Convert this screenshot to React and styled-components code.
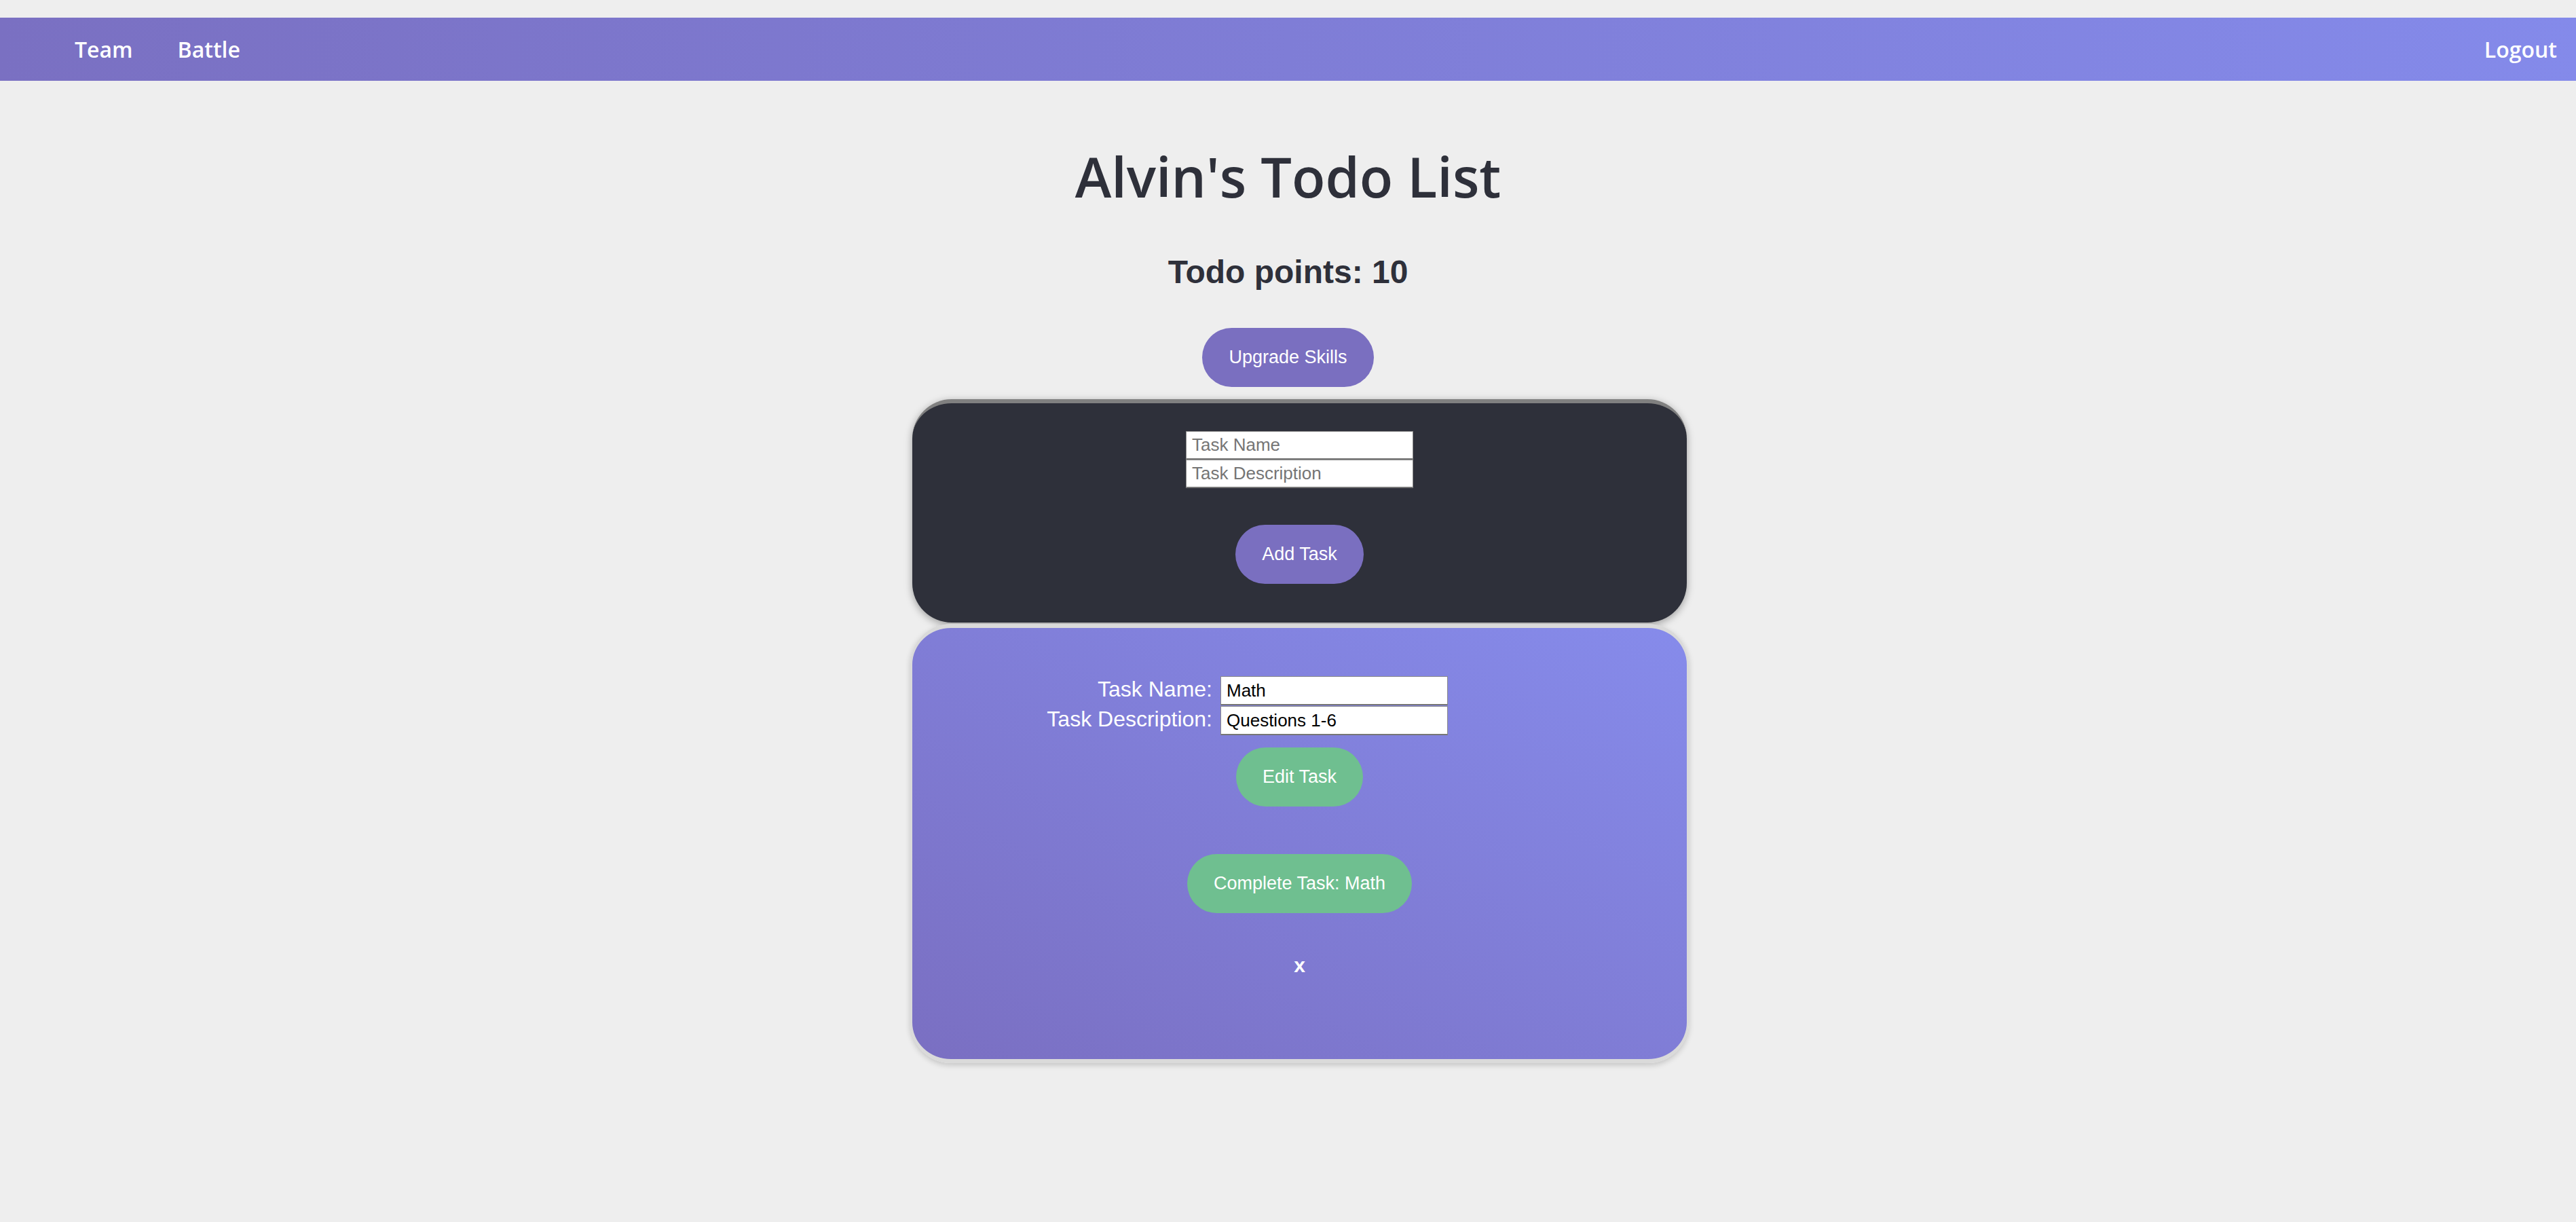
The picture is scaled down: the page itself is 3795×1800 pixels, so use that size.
import React from "react";
import styled, { createGlobalStyle } from "styled-components";

const GlobalStyle = createGlobalStyle`
  html, body {
    margin: 0;
    padding: 0;
    background: #eeeeee;
  }
  body {
    font-family: "Liberation Sans", Arial, sans-serif;
  }
`;

const Page = styled.div`
  min-height: 1800px;
  padding-top: 26px;
  box-sizing: border-box;
  display: flex;
  flex-direction: column;
`;

const NavBar = styled.nav`
  height: 93px;
  display: flex;
  align-items: center;
  padding: 0 28px 0 110px;
  background: linear-gradient(to right, #7a70c2, #848aea);
  font-family: "Open Sans", sans-serif;
  font-weight: 600;
  font-size: 32px;
  color: #ffffff;
`;

const NavLinks = styled.div`
  display: flex;
  gap: 66px;
  flex: 1;
`;

const NavLink = styled.a`
  color: #ffffff;
  text-decoration: none;
  cursor: pointer;
`;

const Main = styled.main`
  display: flex;
  flex-direction: column;
  align-items: center;
`;

const Title = styled.h1`
  margin: 84px 0 0;
  font-family: "Open Sans", sans-serif;
  font-weight: 600;
  font-size: 81px;
  line-height: 114px;
  color: #2e303a;
`;

const Points = styled.h2`
  margin: 56px 0 0;
  font-family: "Liberation Sans", Arial, sans-serif;
  font-weight: 700;
  font-size: 48px;
  line-height: 55px;
  color: #2e303a;
`;

const PillButton = styled.button`
  height: 87px;
  padding: 0 39px;
  border: none;
  border-radius: 44px;
  background: ${(p) => (p.$green ? "#6fbf90" : "#7a6fc0")};
  color: #ffffff;
  font-family: "Liberation Sans", Arial, sans-serif;
  font-size: 27px;
  cursor: pointer;
  margin-top: ${(p) => p.$top || 0}px;
`;

const CardColumn = styled.div`
  display: flex;
  flex-direction: column;
  align-items: center;
  padding-left: 34px;
  margin-top: 18px;
`;

const DarkCard = styled.section`
  width: 1141px;
  box-sizing: border-box;
  border-top: 6px solid #808080;
  border-radius: 58px;
  background: #2e303a;
  box-shadow: 0 3px 12px rgba(0, 0, 0, 0.35);
  padding: 41px 0 57px;
  display: flex;
  flex-direction: column;
  align-items: center;
`;

const InputStack = styled.div`
  display: flex;
  flex-direction: column;
`;

const TextInput = styled.input`
  width: 335px;
  height: ${(p) => p.$h || 42}px;
  box-sizing: border-box;
  margin: 0;
  padding: 0 8px;
  border: 1px solid #8a8a8a;
  border-bottom: 2px solid #767676;
  background: #ffffff;
  font-family: "Liberation Sans", Arial, sans-serif;
  font-size: 26px;
  color: #000000;
  outline: none;
  &::placeholder {
    color: #757575;
  }
`;

const TaskCard = styled.section`
  width: 1147px;
  box-sizing: border-box;
  margin-top: 2px;
  border: 6px solid #dadada;
  border-left-width: 3px;
  border-right-width: 3px;
  border-radius: 60px;
  background: linear-gradient(to top right, #7a6fc2, #868beb);
  box-shadow: 0 3px 8px rgba(0, 0, 0, 0.18);
  padding: 71px 0 121px;
  display: flex;
  flex-direction: column;
  align-items: center;
`;

const FormGrid = styled.div`
  align-self: stretch;
  display: grid;
  grid-template-columns: 442px 335px;
  column-gap: 12px;
  row-gap: 1px;
  align-items: baseline;
`;

const FieldLabel = styled.label`
  text-align: right;
  font-family: "Liberation Sans", Arial, sans-serif;
  font-size: 32px;
  color: #ffffff;
`;

const CloseButton = styled.button`
  margin-top: 60px;
  border: none;
  background: transparent;
  padding: 0;
  font-family: "Liberation Sans", Arial, sans-serif;
  font-weight: 700;
  font-size: 30px;
  color: #ffffff;
  cursor: pointer;
`;

export default function App() {
  return (
    <>
      <GlobalStyle />
      <Page>
        <NavBar>
          <NavLinks>
            <NavLink>Team</NavLink>
            <NavLink>Battle</NavLink>
          </NavLinks>
          <NavLink>Logout</NavLink>
        </NavBar>
        <Main>
          <Title>Alvin's Todo List</Title>
          <Points>Todo points: 10</Points>
          <PillButton $top={55}>Upgrade Skills</PillButton>
        </Main>
        <CardColumn>
          <DarkCard>
            <InputStack>
              <TextInput placeholder="Task Name" />
              <TextInput placeholder="Task Description" />
            </InputStack>
            <PillButton $top={54}>Add Task</PillButton>
          </DarkCard>
          <TaskCard>
            <FormGrid>
              <FieldLabel>Task Name:</FieldLabel>
              <TextInput $h={43} defaultValue="Math" />
              <FieldLabel>Task Description:</FieldLabel>
              <TextInput $h={43} defaultValue="Questions 1-6" />
            </FormGrid>
            <PillButton $green $top={18}>Edit Task</PillButton>
            <PillButton $green $top={70}>Complete Task: Math</PillButton>
            <CloseButton>x</CloseButton>
          </TaskCard>
        </CardColumn>
      </Page>
    </>
  );
}
